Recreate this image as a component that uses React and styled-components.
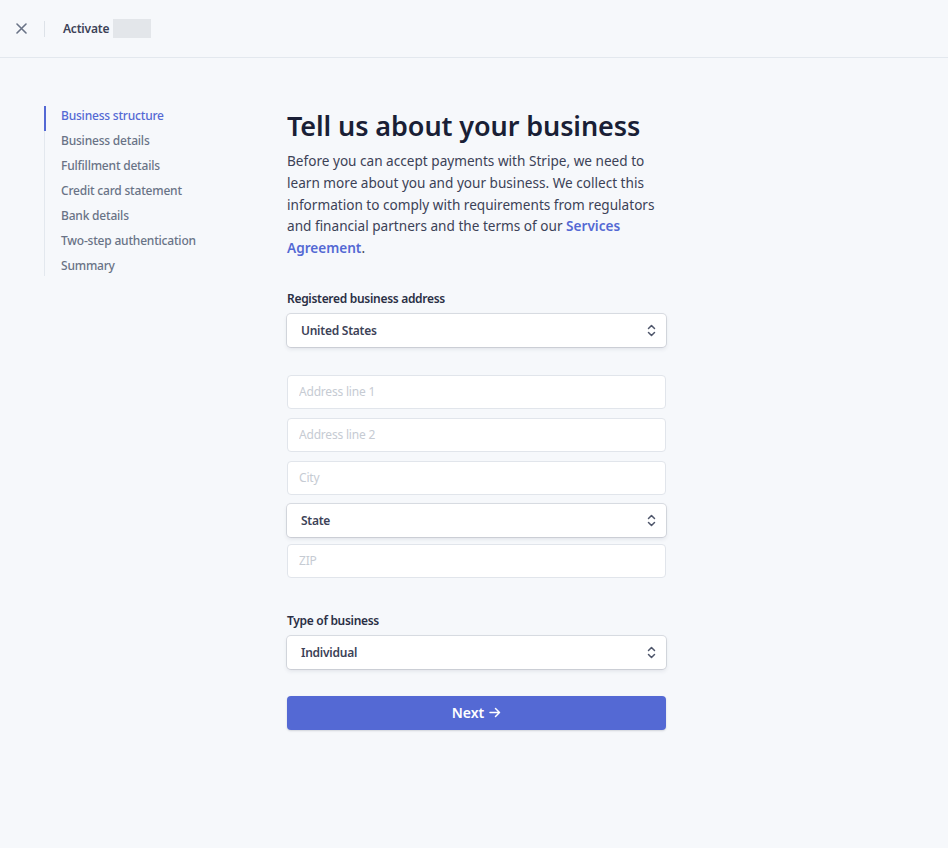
import React from "react";
import styled, { createGlobalStyle } from "styled-components";

const GlobalStyle = createGlobalStyle`
  html, body {
    margin: 0;
    padding: 0;
    background: #f6f8fb;
  }
  body {
    font-family: "Noto Sans", "Open Sans", sans-serif;
    color: #3c4257;
  }
  * { box-sizing: border-box; }
`;

const Page = styled.div`
  min-height: 848px;
  background: #f6f8fb;
`;

const Header = styled.header`
  height: 58px;
  display: flex;
  align-items: center;
  padding-left: 14px;
  border-bottom: 1px solid #e3e8ee;
`;

const CloseButton = styled.button`
  width: 14px;
  height: 14px;
  padding: 0;
  border: none;
  background: none;
  display: flex;
  align-items: center;
  justify-content: center;
  cursor: pointer;
`;

const Divider = styled.div`
  width: 1px;
  height: 16px;
  background: #dde2e8;
  margin: 0 18px 0 16px;
`;

const Title = styled.span`
  font-size: 12px;
  font-weight: 600;
  letter-spacing: -0.2px;
  color: #3c4257;
`;

const Redacted = styled.span`
  display: inline-block;
  width: 38px;
  height: 19px;
  margin-left: 4px;
  background: #e3e6ea;
`;

const Body = styled.div`
  display: flex;
  padding: 48px 0 0 44px;
`;

const Nav = styled.nav`
  width: 243px;
  display: flex;
  flex-direction: column;
  border-left: 1px solid #e3e8ee;
  align-self: flex-start;
`;

const NavItem = styled.a`
  display: block;
  height: 25px;
  line-height: 20px;
  padding-left: 15px;
  margin-left: -1px;
  font-size: 12px;
  font-weight: 500;
  letter-spacing: -0.2px;
  text-decoration: none;
  color: ${(p) => (p.$active ? "#5469d4" : "#697386")};
  border-left: 2px solid ${(p) => (p.$active ? "#5469d4" : "transparent")};
  &:last-child {
    height: 20px;
  }
`;

const Main = styled.main`
  width: 379px;
  padding-top: 2px;
`;

const Heading = styled.h1`
  margin: 0 0 6px;
  font-size: 27px;
  font-weight: 600;
  line-height: 36px;
  color: #1a1f36;
  letter-spacing: -0.1px;
`;

const Intro = styled.p`
  margin: 0 0 31px;
  font-size: 13.6px;
  line-height: 21.75px;
  color: #3c4257;
`;

const Link = styled.a`
  color: #5469d4;
  font-weight: 600;
  text-decoration: none;
`;

const Label = styled.label`
  display: block;
  font-size: 12px;
  font-weight: 600;
  letter-spacing: -0.3px;
  color: #2a2f45;
  margin-bottom: 7px;
`;

const Section = styled.div`
  margin-bottom: ${(p) => p.$gap || 0}px;
`;

const Fields = styled.div`
  display: flex;
  flex-direction: column;
  gap: 9px;
`;

const SelectBox = styled.div`
  height: 33px;
  display: flex;
  align-items: center;
  justify-content: space-between;
  padding: 0 10px 0 14px;
  background: #fff;
  border-radius: 4px;
  box-shadow: 0 0 0 1px rgba(60, 66, 87, 0.15), 0 2px 4px rgba(60, 66, 87, 0.12);
  font-size: 12px;
  font-weight: 600;
  letter-spacing: -0.25px;
  color: #3c4257;
`;

const Input = styled.input`
  height: 34px;
  width: 100%;
  margin-top: ${(p) => (p.$snug ? "-2px" : "0")};
  padding: 0 11px;
  border: 1px solid #e1e5eb;
  border-radius: 4px;
  background: #fff;
  font-family: inherit;
  font-size: 12px;
  letter-spacing: -0.2px;
  color: #3c4257;
  outline: none;
  &::placeholder {
    color: #c6cbd3;
  }
`;

const NextButton = styled.button`
  width: 100%;
  height: 34px;
  border: none;
  border-radius: 4px;
  background: #5469d4;
  color: #fff;
  font-family: inherit;
  font-size: 14px;
  font-weight: 600;
  display: flex;
  align-items: center;
  justify-content: center;
  gap: 5px;
  box-shadow: 0 1px 2px rgba(60, 66, 87, 0.2);
  cursor: pointer;
`;

const Chevrons = () => (
  <svg width="9" height="13" viewBox="0 0 9 13" fill="none" stroke="#4f566b" strokeWidth="1.5" strokeLinecap="round" strokeLinejoin="round">
    <path d="M1.5 4.5 L4.5 1.5 L7.5 4.5" />
    <path d="M1.5 8.5 L4.5 11.5 L7.5 8.5" />
  </svg>
);

const Select = ({ children }) => (
  <SelectBox>
    <span>{children}</span>
    <Chevrons />
  </SelectBox>
);

const steps = [
  "Business structure",
  "Business details",
  "Fulfillment details",
  "Credit card statement",
  "Bank details",
  "Two-step authentication",
  "Summary",
];

export default function App() {
  return (
    <Page>
      <GlobalStyle />
      <Header>
        <CloseButton aria-label="Close">
          <svg width="11" height="11" viewBox="0 0 11 11" stroke="#697386" strokeWidth="1.6" strokeLinecap="round">
            <path d="M1 1 L10 10 M10 1 L1 10" />
          </svg>
        </CloseButton>
        <Divider />
        <Title>Activate</Title>
        <Redacted />
      </Header>
      <Body>
        <Nav>
          {steps.map((s, i) => (
            <NavItem key={s} $active={i === 0}>
              {s}
            </NavItem>
          ))}
        </Nav>
        <Main>
          <Heading>Tell us about your business</Heading>
          <Intro>
            Before you can accept payments with Stripe, we need to learn more about you and your
            business. We collect this information to comply with requirements from regulators and
            financial partners and the terms of our <Link>Services Agreement</Link>.
          </Intro>
          <Section $gap={28}>
            <Label>Registered business address</Label>
            <Select>United States</Select>
          </Section>
          <Section $gap={34}>
            <Fields>
              <Input placeholder="Address line 1" />
              <Input placeholder="Address line 2" />
              <Input placeholder="City" />
              <Select>State</Select>
              <Input placeholder="ZIP" $snug />
            </Fields>
          </Section>
          <Section $gap={27}>
            <Label>Type of business</Label>
            <Select>Individual</Select>
          </Section>
          <NextButton>
            Next
            <svg width="12" height="11" viewBox="0 0 12 11" fill="none" stroke="#fff" strokeWidth="1.5" strokeLinecap="round" strokeLinejoin="round">
              <path d="M1 5.5 H10.5 M6.5 1.5 L10.5 5.5 L6.5 9.5" />
            </svg>
          </NextButton>
        </Main>
      </Body>
    </Page>
  );
}
